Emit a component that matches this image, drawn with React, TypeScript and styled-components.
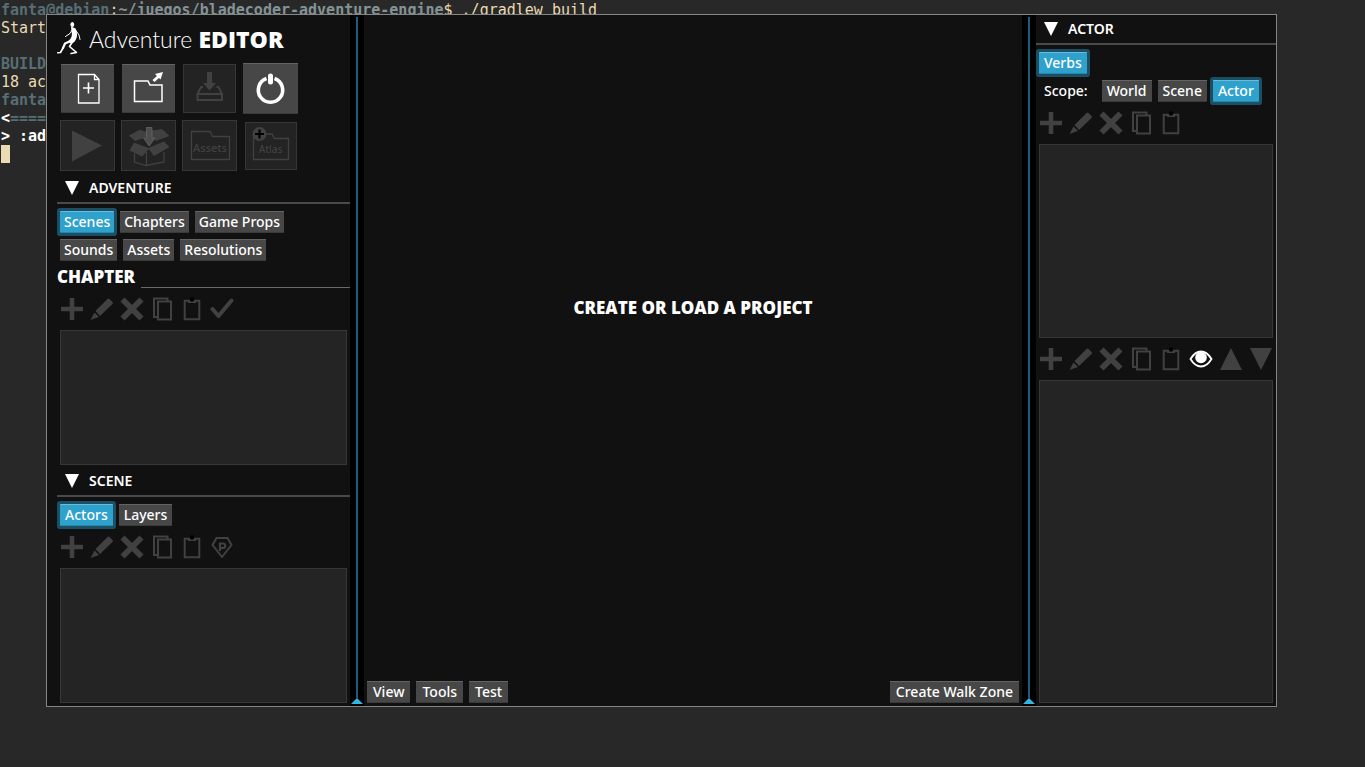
import React from 'react';
import styled, { createGlobalStyle, css } from 'styled-components';

const Global = createGlobalStyle`
  * { box-sizing: border-box; }
  html, body, #root { height: 100%; margin: 0; }
  body { background: #282828; overflow: hidden; }
  button { font: inherit; }
`;

const ui = '"Noto Sans", "Open Sans", sans-serif';
const display = '"Open Sans", "Noto Sans", sans-serif';

const Desktop = styled.div`
  position: relative;
  min-height: 100vh;
  background: #282828;
  overflow: hidden;
`;

const Terminal = styled.div`
  padding: 1px;
  font: 15px/18px "DejaVu Sans Mono", monospace;
  color: #ebdbb2;
`;
const Line = styled.div`
  display: flex;
  height: 18px;
  white-space: pre;
`;
const User = styled.b`color: #586e75;`;
const Path = styled.b`color: #839496;`;
const Bright = styled.b`color: #fff;`;
const Cursor = styled.span`
  width: 9px;
  background: #ebdbb2;
`;

const EditorWindow = styled.main`
  position: absolute;
  inset: 14px 88px 60px 46px;
  display: flex;
  border: 1px solid #868686;
  background: #111;
  color: #fff;
  font: 500 14px/22px ${ui};
`;

const LeftPane = styled.aside`
  display: flex;
  flex-direction: column;
  width: 303px;
  padding: 0 0 3px 10px;
`;
const RightPane = styled.aside`
  display: flex;
  flex-direction: column;
  width: 240px;
  padding-bottom: 3px;
`;
const Stage = styled.section`
  display: flex;
  flex-direction: column;
  flex: 1;
  min-width: 0;
`;

const Splitter = styled.div`
  display: flex;
  flex-direction: column;
  align-items: center;
  width: 14px;
  padding: 2px 0;
  background: #000;
  &::before {
    content: "";
    flex: 1;
    width: 2px;
    background: #1d5d78;
  }
  svg { display: block; }
`;

const Brand = styled.h1`
  display: flex;
  align-items: center;
  gap: 8px;
  height: 45px;
  margin: 0;
  padding-top: 2px;
  font: 300 23px/30px Lato, sans-serif;
  b { font: 800 23px/30px ${display}; }
  svg { flex: none; }
`;

const ToolGrid = styled.div`
  display: grid;
  grid-template-columns: repeat(4, 61px);
  grid-auto-rows: 57px;
  place-items: center;
`;
const sizes = { s: [52, 48], m: [53, 49], l: [55, 51] };
const ToolButton = styled.button<{ $size: 's' | 'm' | 'l' }>`
  display: flex;
  align-items: center;
  justify-content: center;
  width: ${p => sizes[p.$size][0]}px;
  height: ${p => sizes[p.$size][1]}px;
  padding: 0;
  border: 0;
  border-top: 1px solid #636363;
  border-bottom: 1px solid #3a3a3a;
  background: #474747;
  color: #fff;
  &:disabled {
    border: 1px solid #373737;
    background: #232323;
    color: #414141;
  }
`;

const SectionHeader = styled.h2`
  display: flex;
  align-items: center;
  gap: 10px;
  flex: none;
  height: 30px;
  margin: 0;
  padding-left: 8px;
  border-bottom: 2px solid #4a4a4a;
  font: 600 14px/22px ${ui};
`;

const TextButton = styled.button<{ $active?: boolean }>`
  height: 22px;
  padding: 0 5px;
  border: 0;
  border-top: 1px solid #636363;
  border-bottom: 1px solid #3a3a3a;
  background: #474747;
  color: #fff;
  line-height: 20px;
  white-space: nowrap;
  ${p => p.$active && css`
    border-top-color: #6dbcdc;
    border-bottom-color: #2488ac;
    background: #2fa1cd;
    box-shadow: 0 0 0 3px #1c4f63;
    border-radius: 1px;
  `}
`;
const Tabs = styled.div<{ $tight?: boolean }>`
  display: flex;
  flex-wrap: wrap;
  gap: 6px;
  flex: none;
  padding: 3px;
  ${p => p.$tight && css`
    ${TextButton} { padding: 0 4px; }
  `}
`;
const TabArea = styled.div`
  flex: none;
  padding-top: 4px;
`;
const ScopeLabel = styled.span`
  padding: 0 8px 0 5px;
`;

const ChapterTitle = styled.h3`
  display: flex;
  align-items: flex-end;
  gap: 6px;
  flex: none;
  height: 24px;
  margin: 0;
  font: 800 17px/23px ${display};
  &::after {
    content: "";
    flex: 1;
    border-bottom: 1px solid #6a6a6a;
  }
`;

const IconRow = styled.div`
  display: flex;
  flex: none;
  padding: 3px 0 6px;
`;
const TitledIcons = styled(IconRow)`
  padding-top: 6px;
`;
const IconButton = styled.button`
  width: 30px;
  height: 30px;
  padding: 3px;
  border: 0;
  background: none;
  color: #fff;
  &:disabled { color: #414141; }
  svg { display: block; }
`;

const ListBox = styled.div<{ $grow?: number }>`
  flex: ${p => p.$grow ?? 1} 1 0;
  margin: 0 3px;
  border: 1px solid #373737;
  background: #242424;
`;
const ChapterList = styled(ListBox)`
  margin-bottom: 2px;
`;

const Notice = styled.div`
  display: flex;
  flex-direction: column;
  align-items: center;
  flex: 1;
  font: 800 17px/24px ${display};
  &::before { content: ""; flex: 11; }
  &::after { content: ""; flex: 14; }
`;
const StageBar = styled.div`
  display: flex;
  gap: 6px;
  padding: 3px;
  ${TextButton} { padding: 0 6px; }
`;
const Push = styled.span`flex: 1;`;

const Icon = ({ children, size = 24 }: { children: React.ReactNode; size?: number }) => (
  <svg width={size} height={size} viewBox={`0 0 ${size} ${size}`} fill="none" stroke="currentColor" aria-hidden="true">
    {children}
  </svg>
);

const glyphs: Record<string, React.ReactNode> = {
  Add: <path d="M12 1v22M1 12h22" strokeWidth="4.600" />,
  Edit: <g fill="currentColor" stroke="none"><path d="M5.500 14 17.500 2q1-1 2 0l3 3q1 1 0 2L10 19z" /><path d="m4.500 15.500 4.500 4.500L.5 23z" /></g>,
  Delete: <path d="m2.500 2.500 19 19m0-19-19 19" strokeWidth="5.800" />,
  Copy: <path d="M8 4.500h13v18H8zM7.500 20H4V1.500h13.500V4" strokeWidth="2" />,
  Paste: <g><path d="M4.700 3.700h14.600v18.600H4.700z" strokeWidth="2" /><path d="M8 3h8v3H8z" fill="currentColor" stroke="none" /><circle cx="12" cy="2.500" r="2.200" fill="#000" stroke="none" /></g>,
  Check: <path d="m2.500 12 6 7L21.500 3.500" strokeWidth="4" strokeLinecap="round" strokeLinejoin="round" />,
  Player: <g><path d="M6.500 3h11l4 7-9.500 12L2.500 10z" strokeWidth="2" /><path d="M10 16V8.500h3a2 2 0 0 1 0 4.500h-3" strokeWidth="2.200" /></g>,
  Visibility: <g><path d="M1.500 12Q6 4.500 12 4.500T22.500 12Q18 19.500 12 19.500T1.500 12z" strokeWidth="1.800" /><circle cx="12" cy="10.500" r="5.800" fill="currentColor" stroke="none" /></g>,
  'Move up': <path d="m12 1 11 22H1z" fill="currentColor" stroke="none" />,
  'Move down': <path d="M1 1h22L12 23z" fill="currentColor" stroke="none" />,
};

const IconBtn = ({ name }: { name: string }) => (
  <IconButton aria-label={name} disabled={name !== 'Visibility'}>
    <Icon>{glyphs[name]}</Icon>
  </IconButton>
);
const baseIcons = ['Add', 'Edit', 'Delete', 'Copy', 'Paste'];

const Triangle = () => (
  <svg width="14" height="14" viewBox="0 0 14 14" aria-hidden="true"><path d="M0 0h14L7 14z" fill="#fff" /></svg>
);
const Handle = () => (
  <svg width="12" height="6" viewBox="0 0 12 6" aria-hidden="true"><path d="M0 6 6 0l6 6z" fill="#33b5e5" /></svg>
);

const Runner = () => (
  <svg width="24" height="34" viewBox="0 0 24 34" fill="none" stroke="#fff" strokeLinecap="round" strokeLinejoin="round" aria-hidden="true">
    <ellipse cx="15.300" cy="2.500" rx="1.900" ry="2.500" fill="#fff" stroke="none" />
    <path d="M14 4.500 18.500 6.500q2.500 5 1 9.500-1.500 4.500-5 5.500l-4-1.500q6-5 4-10.500z" fill="#fff" stroke="none" />
    <path d="M15 8 13 11.500 8.500 14.500M18.500 8l3.500 5 1 4.500" strokeWidth="1" />
    <path d="M12.500 19.500 8 21.500 6 26" strokeWidth="2.200" />
    <path d="M6 26 3.500 30.500 .8 30.800M16 19 12.500 24.500 19 30" strokeWidth="1.600" />
    <path d="M19.500 30.500 14 31.500" strokeWidth="1.500" />
  </svg>
);

const tools: { name: string; size: 's' | 'm' | 'l'; on?: boolean; art: React.ReactNode }[] = [
  { name: 'New project', size: 'm', on: true, art: <g><path d="M12.500 7.500h16l4.500 5v23.500h-20.500zM28.500 7.500v5H33" strokeWidth="1.300" /><path d="M22.500 15.500v11m-5.500-5.500h11" strokeWidth="1.600" /></g> },
  { name: 'Load project', size: 'm', on: true, art: <g><path d="M7.500 14h13.500l2 4h12v16.500h-27.500z" strokeWidth="1.500" /><path d="m26.500 14 5-4.500" strokeWidth="3" /><path d="m28 7 8-2-2.500 7.500z" fill="currentColor" stroke="none" /></g> },
  { name: 'Save project', size: 'm', art: <g><path d="M9.500 27h24.500v6h-24.500zM15 20h-2l-3.500 7M28.500 20h2l3.500 7" strokeWidth="2" /><path d="M19 5h5v11h4L21.500 23.500 15 16h4z" fill="currentColor" stroke="none" /></g> },
  { name: 'Exit', size: 'l', on: true, art: <g><path d="M17.500 11.500a12.200 12.200 0 1 0 8 0" strokeWidth="3.600" /><path d="M21.500 9v6" strokeWidth="5" strokeLinecap="round" /></g> },
  { name: 'Run', size: 'l', art: <path d="m6 6.500 30 15L6 37.500z" fill="currentColor" stroke="none" /> },
  { name: 'Package', size: 'l', art: <g><g fill="currentColor" stroke="none"><path d="M1.800 11.500 12.800 5.800 20 8v5L8 17zM25 6.500l10-1.500 7.500 7L29 17l-6-5zM7 18.500l15.500 6L15 32.500 2.500 26.500zM37 17.500l5.500 5.500L27 32l-6-8z" /></g><path d="M7.500 29.500v8.500L19 41.500 37 38v-10M19.500 28v13.500" strokeWidth="1.300" /><path d="M19.500 3.500h5.500v10.500h3L22.200 22 16.500 14h3z" fill="#4d4d4d" stroke="#6a6a6a" strokeWidth="0.700" /></g> },
  { name: 'Assets', size: 'l', art: <g><path d="M3.500 7.500h18.500l2.500 5h17v23h-38z" strokeWidth="1.300" /><text x="22" y="27.500" textAnchor="middle" fontFamily="Noto Sans" fontSize="11" fill="currentColor" stroke="none">Assets</text></g> },
  { name: 'Atlas', size: 's', art: <g><path d="M4.500 10h18.500l2.500 4.500h14v21h-35z" strokeWidth="1.300" /><text x="21.500" y="28.500" textAnchor="middle" fontFamily="Noto Sans" fontSize="10" fill="currentColor" stroke="none">Atlas</text><circle cx="10.500" cy="10" r="7" fill="currentColor" stroke="none" /><path d="M10.500 5.500v9M6 10h9" stroke="#000" strokeWidth="2.200" /></g> },
];

const Header = ({ children }: { children: string }) => (
  <SectionHeader><Triangle />{children}</SectionHeader>
);

export default function App() {
  return (
    <Desktop>
      <Global />
      <Terminal>
        <Line><User>fanta@debian</User><span>:</span><Path>~/juegos/bladecoder-adventure-engine</Path><span>$ ./gradlew build</span></Line>
        <Line>Start</Line>
        <Line />
        <Line><User>BUILD</User></Line>
        <Line>18 ac</Line>
        <Line><User>fanta</User></Line>
        <Line><Bright>{'<'}</Bright><User>====</User></Line>
        <Line><Bright>{'> :ad'}</Bright></Line>
        <Line><Cursor /></Line>
      </Terminal>
      <EditorWindow>
        <LeftPane>
          <Brand><Runner /><span>Adventure <b>EDITOR</b></span></Brand>
          <ToolGrid>
            {tools.map(t => (
              <ToolButton key={t.name} $size={t.size} disabled={!t.on} aria-label={t.name}>
                <Icon size={44}>{t.art}</Icon>
              </ToolButton>
            ))}
          </ToolGrid>
          <Header>ADVENTURE</Header>
          <TabArea>
            <Tabs $tight>
              <TextButton $active>Scenes</TextButton>
              <TextButton>Chapters</TextButton>
              <TextButton>Game Props</TextButton>
              <TextButton>Sounds</TextButton>
              <TextButton>Assets</TextButton>
              <TextButton>Resolutions</TextButton>
            </Tabs>
          </TabArea>
          <ChapterTitle>CHAPTER</ChapterTitle>
          <TitledIcons>{[...baseIcons, 'Check'].map(n => <IconBtn key={n} name={n} />)}</TitledIcons>
          <ChapterList />
          <Header>SCENE</Header>
          <TabArea>
            <Tabs>
              <TextButton $active>Actors</TextButton>
              <TextButton>Layers</TextButton>
            </Tabs>
          </TabArea>
          <IconRow>{[...baseIcons, 'Player'].map(n => <IconBtn key={n} name={n} />)}</IconRow>
          <ListBox />
        </LeftPane>
        <Splitter><Handle /></Splitter>
        <Stage>
          <Notice>CREATE OR LOAD A PROJECT</Notice>
          <StageBar>
            <TextButton>View</TextButton>
            <TextButton>Tools</TextButton>
            <TextButton>Test</TextButton>
            <Push />
            <TextButton>Create Walk Zone</TextButton>
          </StageBar>
        </Stage>
        <Splitter><Handle /></Splitter>
        <RightPane>
          <Header>ACTOR</Header>
          <TabArea>
            <Tabs><TextButton $active>Verbs</TextButton></Tabs>
            <Tabs>
              <ScopeLabel>Scope:</ScopeLabel>
              <TextButton>World</TextButton>
              <TextButton>Scene</TextButton>
              <TextButton $active>Actor</TextButton>
            </Tabs>
          </TabArea>
          <IconRow>{baseIcons.map(n => <IconBtn key={n} name={n} />)}</IconRow>
          <ListBox $grow={3} />
          <TitledIcons>{[...baseIcons, 'Visibility', 'Move up', 'Move down'].map(n => <IconBtn key={n} name={n} />)}</TitledIcons>
          <ListBox $grow={5} />
        </RightPane>
      </EditorWindow>
    </Desktop>
  );
}
